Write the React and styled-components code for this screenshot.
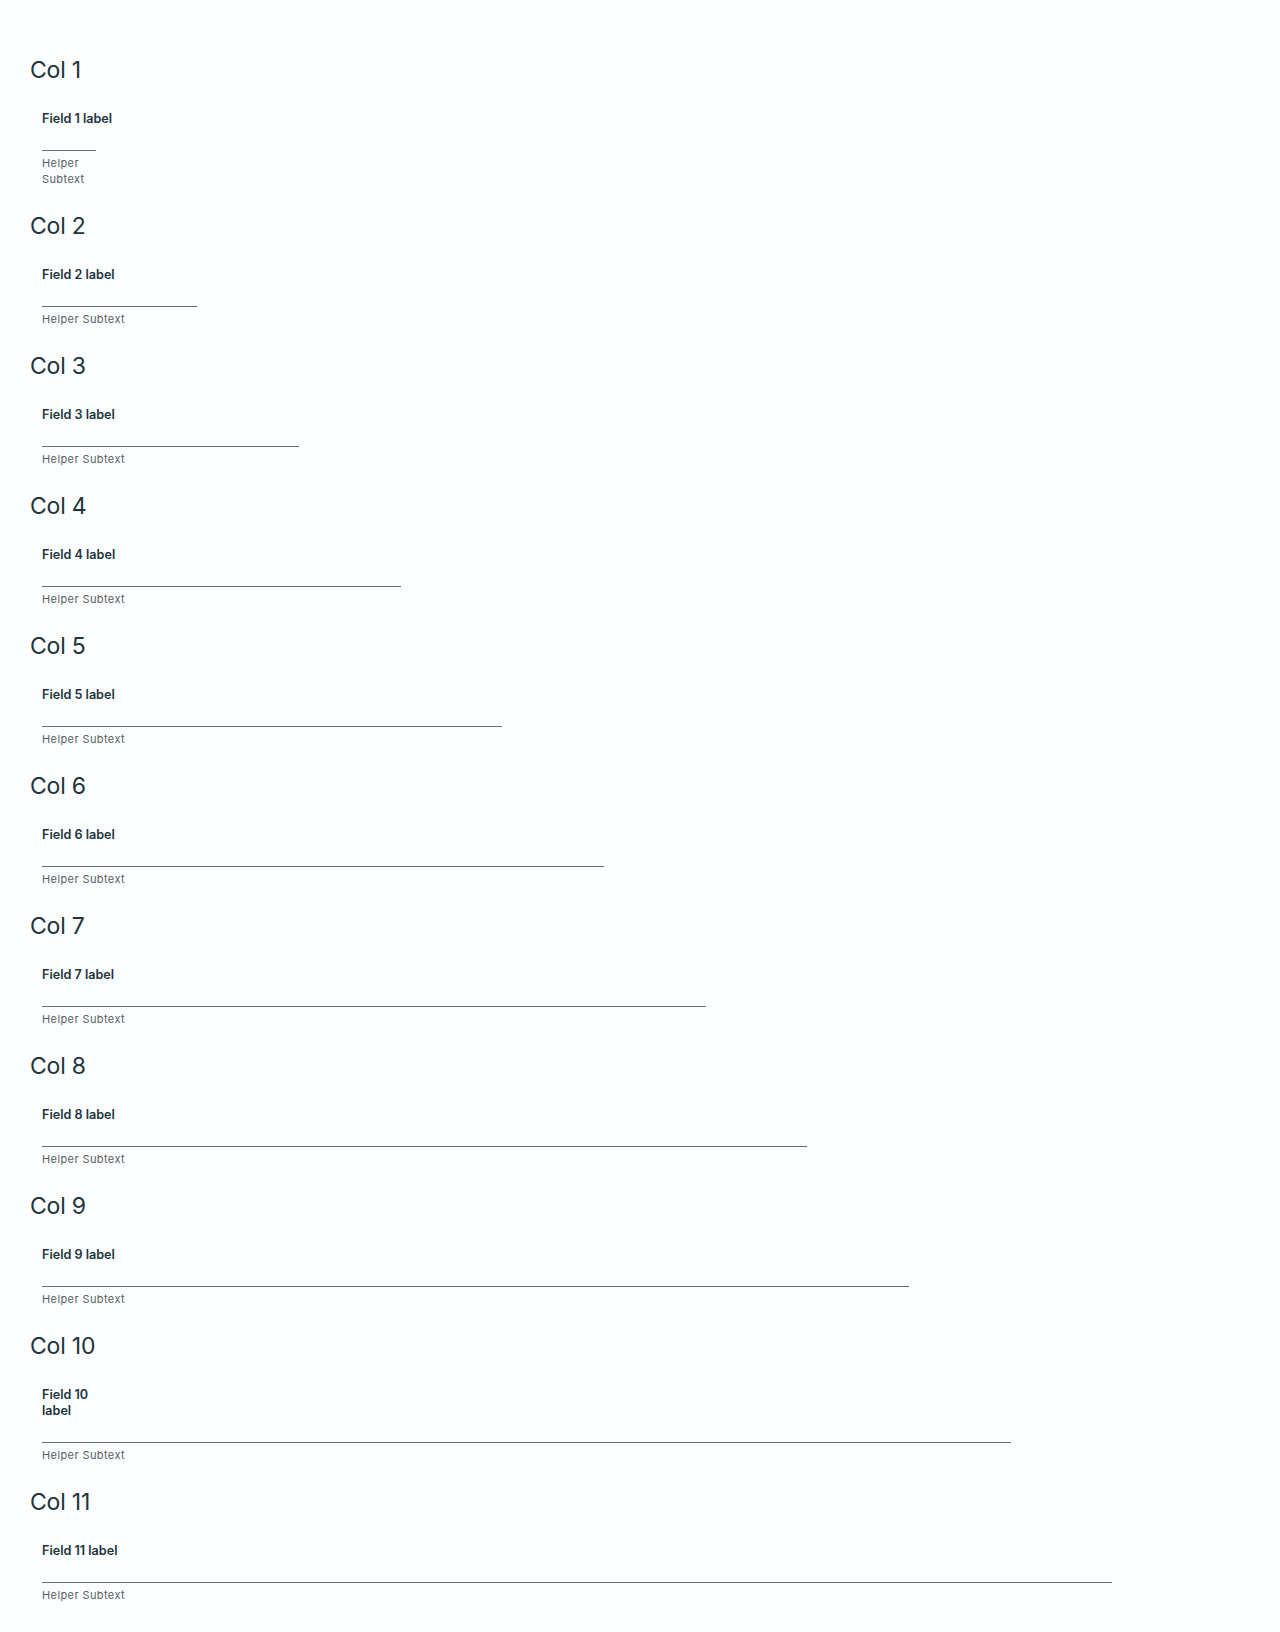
import React from "react";
import styled, { createGlobalStyle } from "styled-components";

const GlobalStyle = createGlobalStyle`
  html, body {
    margin: 0;
    padding: 0;
    background: #fbfdfe;
  }
  body {
    font-family: Inter, "Noto Sans", sans-serif;
    color: #21333b;
  }
`;

const Page = styled.div`
  padding: 56px 30px 40px 30px;
`;

const Section = styled.section`
  margin-bottom: 25px;
`;

const Heading = styled.h3`
  margin: 0;
  font-size: 23px;
  line-height: 28px;
  font-weight: 400;
  color: #21333b;
  letter-spacing: -0.2px;
`;

const Row = styled.div`
  display: flex;
  flex-wrap: wrap;
  margin-top: 27px;
`;

const Col = styled.div`
  box-sizing: border-box;
  flex: 0 0 ${(p) => (p.$span / 12) * 100}%;
  max-width: ${(p) => (p.$span / 12) * 100}%;
  padding: 0 36px 0 12px;
`;

const Label = styled.label`
  display: block;
  width: max-content;
  max-width: 77px;
  font-size: 12.6px;
  line-height: 16px;
  font-weight: 600;
  color: #21333b;
`;

const Input = styled.input`
  display: block;
  box-sizing: border-box;
  width: 100%;
  height: 24px;
  margin: 0;
  padding: 0 6px;
  border: none;
  border-bottom: 1px solid #646b72;
  background: transparent;
  font: inherit;
  outline: none;
`;

const Helper = styled.div`
  margin-top: 4px;
  font-size: 11px;
  line-height: 16px;
  letter-spacing: 0.4px;
  color: #565d63;
`;

const cols = [1, 2, 3, 4, 5, 6, 7, 8, 9, 10, 11];

export default function App() {
  return (
    <>
      <GlobalStyle />
      <Page>
        {cols.map((n) => (
          <Section key={n}>
            <Heading>Col {n}</Heading>
            <Row>
              <Col $span={n}>
                <Label htmlFor={`field-${n}`}>Field {n} label</Label>
                <Input id={`field-${n}`} type="text" />
                <Helper>Helper Subtext</Helper>
              </Col>
            </Row>
          </Section>
        ))}
      </Page>
    </>
  );
}
